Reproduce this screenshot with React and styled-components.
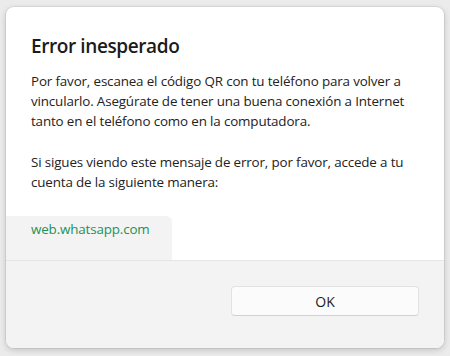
import React from 'react'
import styled, { createGlobalStyle } from 'styled-components'

const Global = createGlobalStyle`
  html, body {
    margin: 0;
    padding: 0;
    background: #ebebeb;
  }
  body {
    font-family: "Open Sans", "Noto Sans", sans-serif;
    -webkit-font-smoothing: antialiased;
  }
`

const Page = styled.div`
  width: 450px;
  height: 356px;
  padding: 7px 6px 0 6px;
  box-sizing: border-box;
`

const Dialog = styled.div`
  width: 438px;
  height: 341px;
  background: #ffffff;
  border-radius: 8px;
  box-shadow: 0 2px 6px rgba(0, 0, 0, 0.18), 0 0 0 1px rgba(0, 0, 0, 0.06);
  display: flex;
  flex-direction: column;
  overflow: hidden;
`

const Body = styled.div`
  height: 253px;
  display: flex;
  flex-direction: column;
`

const Content = styled.div`
  padding: 25px 24px 0 25px;
`

const Title = styled.h1`
  margin: 0;
  font-size: 19px;
  line-height: 28px;
  font-weight: 600;
  color: #1b1b1b;
  letter-spacing: -0.4px;
`

const Text = styled.p`
  margin: ${(p) => p.top}px 0 0 0;
  font-size: 13.4px;
  line-height: 20px;
  color: #222;
  letter-spacing: -0.15px;
`

const LinkBox = styled.div`
  margin-top: auto;
  width: 166px;
  height: 44px;
  box-sizing: border-box;
  padding: 1px 0 0 25px;
  background: #f3f3f3;
  border-top-right-radius: 6px;
`

const Link = styled.a`
  font-size: 13.4px;
  line-height: 20px;
  color: #1e9158;
  text-decoration: none;
  letter-spacing: -0.15px;
`

const Footer = styled.div`
  flex: 1;
  background: #f3f3f3;
  border-top: 1px solid #e5e5e5;
  display: flex;
  justify-content: flex-end;
  align-items: flex-start;
  padding: 25px 25px 0 0;
`

const Button = styled.button`
  width: 188px;
  height: 30px;
  background: #fbfbfb;
  border: 1px solid #e2e2e2;
  border-bottom-color: #d0d0d0;
  border-radius: 4px;
  font-family: inherit;
  font-size: 14px;
  color: #1b1b1b;
  cursor: pointer;
`

export default function App() {
  return (
    <Page>
      <Global />
      <Dialog>
        <Body>
          <Content>
            <Title>Error inesperado</Title>
            <Text top={11}>
              Por favor, escanea el código QR con tu teléfono para volver a<br />
              vincularlo. Asegúrate de tener una buena conexión a Internet<br />
              tanto en el teléfono como en la computadora.
            </Text>
            <Text top={21}>
              Si sigues viendo este mensaje de error, por favor, accede a tu<br />
              cuenta de la siguiente manera:
            </Text>
          </Content>
          <LinkBox>
            <Link href="#">web.whatsapp.com</Link>
          </LinkBox>
        </Body>
        <Footer>
          <Button>OK</Button>
        </Footer>
      </Dialog>
    </Page>
  )
}
